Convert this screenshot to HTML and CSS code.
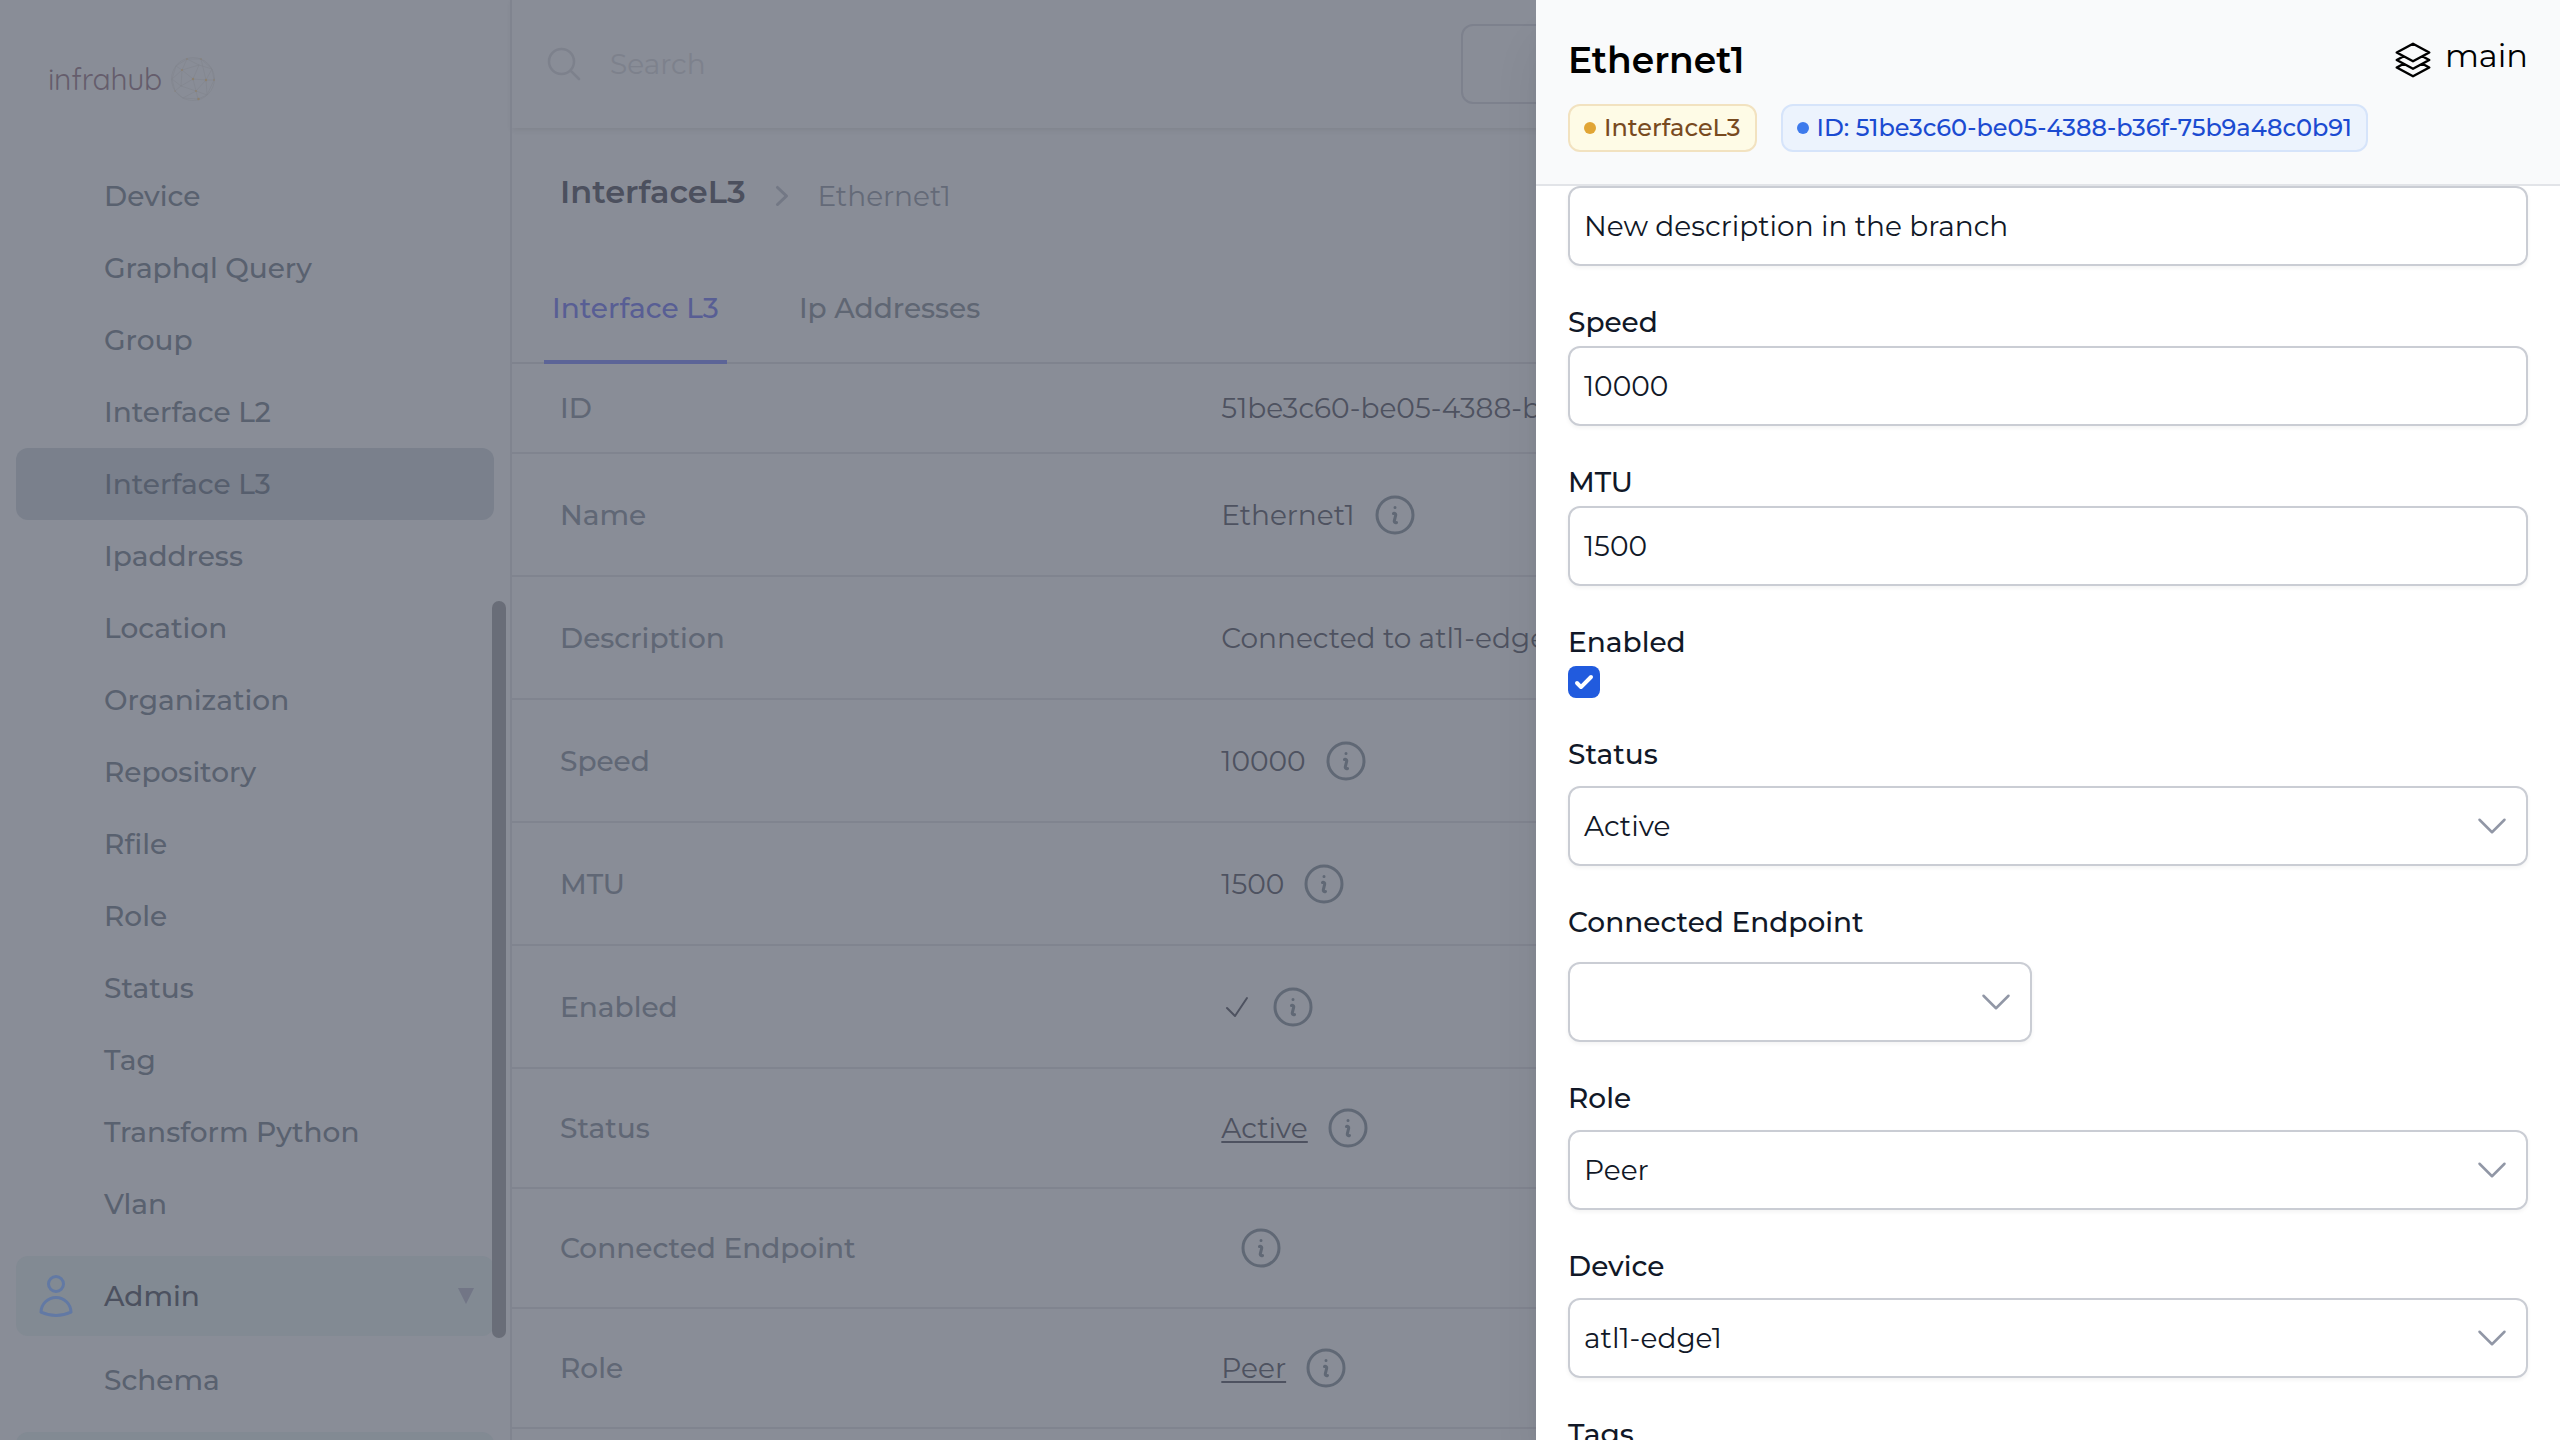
FILE: index.html
```
<!DOCTYPE html>
<html lang="en">
<head>
<meta charset="utf-8">
<title>Infrahub</title>
<link rel="stylesheet" href="styles.css">
</head>
<body>
<svg class="sprite" aria-hidden="true">
  <symbol id="info" viewBox="0 0 24 24"><path d="M11.25 11.25l.041-.02a.75.75 0 011.063.852l-.708 2.836a.75.75 0 001.063.853l.041-.021M21 12a9 9 0 11-18 0 9 9 0 0118 0zm-9-3.75h.008v.008H12V8.25z"/></symbol>
  <symbol id="down" viewBox="0 0 24 24"><path d="M19.5 8.25l-7.5 7.5-7.5-7.5"/></symbol>
</svg>
<div class="app">
  <aside class="sidebar">
    <div class="logo">
      <span class="logo-name">infrahub</span>
      <svg class="globe" viewBox="0 0 48 48">
        <circle class="mesh" cx="24" cy="24" r="21.5"/>
        <path class="mesh" d="M18 4L32 4L43 14L45 25L38 40L29 44L14 43L6 36L3 24L7 11L18 4L13 15L24 24L37 25L45 25M13 15L12 31L24 24L27 36L37 25L32 4M13 15L30 10L24 24M30 10L18 4M30 10L43 14L37 25M12 31L27 36L29 44M12 31L6 36M3 24L13 15L7 11M12 31L3 24M27 36L14 43M37 25L38 40L27 36"/>
        <g class="nodes"><circle cx="24" cy="24" r="1.2"/><circle cx="37" cy="25" r="1.2"/><circle cx="45" cy="25" r=".8"/><circle cx="13" cy="15" r=".9"/><circle cx="27" cy="36" r=".9"/><circle cx="29.500" cy="44" r="1.2"/><circle cx="18" cy="4" r=".7"/><circle cx="32" cy="4" r=".7"/><circle cx="6" cy="36" r=".6"/></g>
      </svg>
    </div>
    <nav class="menu">
      <a class="item">Device</a>
      <a class="item">Graphql Query</a>
      <a class="item">Group</a>
      <a class="item">Interface L2</a>
      <a class="item selected">Interface L3</a>
      <a class="item">Ipaddress</a>
      <a class="item">Location</a>
      <a class="item">Organization</a>
      <a class="item">Repository</a>
      <a class="item">Rfile</a>
      <a class="item">Role</a>
      <a class="item">Status</a>
      <a class="item">Tag</a>
      <a class="item">Transform Python</a>
      <a class="item">Vlan</a>
      <div class="group">
        <svg class="icon-48" viewBox="0 0 24 24"><path d="M15.75 6a3.75 3.75 0 11-7.5 0 3.75 3.75 0 017.5 0zM4.501 20.118a7.5 7.5 0 0114.998 0A17.933 17.933 0 0112 21.75c-2.676 0-5.216-.584-7.499-1.632z"/></svg>
        <span class="group-name">Admin</span>
        <svg class="caret" viewBox="0 0 16 16"><path d="M0 0H16L8 16z"/></svg>
      </div>
      <a class="item">Schema</a>
      <div class="group"></div>
    </nav>
    <div class="scroll-thumb"></div>
  </aside>

  <main class="main">
    <header class="topbar">
      <svg class="icon-40 search-icon" viewBox="0 0 24 24"><path d="M21 21l-5.197-5.197m0 0A7.5 7.5 0 105.196 5.196a7.5 7.5 0 0010.607 10.607z"/></svg>
      <span class="search">Search</span>
      <div class="branch-button"></div>
    </header>
    <div class="crumbs">
      <span class="crumb-kind">InterfaceL3</span>
      <svg class="crumb-sep" viewBox="0 0 20 20"><path d="M7.21 14.77a.75.75 0 01.02-1.06L11.168 10 7.23 6.29a.75.75 0 111.04-1.08l4.5 4.25a.75.75 0 010 1.08l-4.5 4.25a.75.75 0 01-1.06-.02z"/></svg>
      <span class="crumb-name">Ethernet1</span>
    </div>
    <div class="tabs">
      <a class="tab active">Interface L3</a>
      <a class="tab">Ip Addresses</a>
    </div>
    <dl class="rows">
      <div class="row row-id"><dt>ID</dt><dd><span>51be3c60-be05-4388-b36f-75b9a48c0b91</span></dd></div>
      <div class="row"><dt>Name</dt><dd><span>Ethernet1</span><svg class="icon-48"><use href="#info"/></svg></dd></div>
      <div class="row"><dt>Description</dt><dd><span>Connected to atl1-edge1</span></dd></div>
      <div class="row"><dt>Speed</dt><dd><span>10000</span><svg class="icon-48"><use href="#info"/></svg></dd></div>
      <div class="row"><dt>MTU</dt><dd><span>1500</span><svg class="icon-48"><use href="#info"/></svg></dd></div>
      <div class="row"><dt>Enabled</dt><dd><svg class="tick" viewBox="0 0 24 24"><path d="M4.500 12.750l6 6 9-13.500"/></svg><svg class="icon-48"><use href="#info"/></svg></dd></div>
      <div class="row row-rel"><dt>Status</dt><dd><a class="link">Active</a><svg class="icon-48"><use href="#info"/></svg></dd></div>
      <div class="row row-rel"><dt>Connected Endpoint</dt><dd><span></span><svg class="icon-48"><use href="#info"/></svg></dd></div>
      <div class="row row-rel"><dt>Role</dt><dd><a class="link">Peer</a><svg class="icon-48"><use href="#info"/></svg></dd></div>
    </dl>
  </main>
</div>

<section class="drawer">
  <header class="drawer-head">
    <div class="drawer-title">
      <h2>Ethernet1</h2>
      <div class="branch">
        <svg class="icon-40" viewBox="0 0 24 24"><path d="M6.429 9.750L2.250 12l4.179 2.250m0-4.500l5.571 3 5.571-3m-11.142 0L2.250 7.500 12 2.250l9.750 5.250-4.179 2.250m0 0L21.750 12l-4.179 2.250m0 0l4.179 2.250L12 21.750 2.250 16.500l4.179-2.250m11.142 0l-5.571 3-5.571-3"/></svg>
        <span>main</span>
      </div>
    </div>
    <div class="badges">
      <span class="badge kind"><i class="dot"></i>InterfaceL3</span>
      <span class="badge ident"><i class="dot"></i>ID: 51be3c60-be05-4388-b36f-75b9a48c0b91</span>
    </div>
  </header>
  <form class="form">
    <div class="field"><div class="control">New description in the branch</div></div>
    <div class="field"><label>Speed</label><div class="control">10000</div></div>
    <div class="field"><label>MTU</label><div class="control">1500</div></div>
    <div class="field"><label>Enabled</label><div class="checkbox"><svg viewBox="0 0 16 16"><path d="M12.207 4.793a1 1 0 010 1.414l-5 5a1 1 0 01-1.414 0l-2-2a1 1 0 011.414-1.414L6.500 9.086l4.293-4.293a1 1 0 011.414 0z"/></svg></div></div>
    <div class="field select"><label>Status</label><div class="control">Active<svg class="icon-40"><use href="#down"/></svg></div></div>
    <div class="field select endpoint"><label>Connected Endpoint</label><div class="control"><svg class="icon-40"><use href="#down"/></svg></div></div>
    <div class="field select"><label>Role</label><div class="control">Peer<svg class="icon-40"><use href="#down"/></svg></div></div>
    <div class="field select"><label>Device</label><div class="control">atl1-edge1<svg class="icon-40"><use href="#down"/></svg></div></div>
    <div class="field select"><label>Tags</label></div>
  </form>
</section>
</body>
</html>
```
FILE: styles.css
```
* { box-sizing: border-box; }

html, body { height: 100%; }

body {
  margin: 0;
  overflow: hidden;
  font: 400 28px/40px Montserrat, Inter, "Liberation Sans", sans-serif;
  color: #111827;
  background: #898d97;
  -webkit-font-smoothing: antialiased;
}

.sprite { display: none; }

svg { flex: none; fill: none; stroke: currentColor; stroke-width: 1.5; stroke-linecap: round; stroke-linejoin: round; }
.icon-48 { width: 48px; height: 48px; }
.icon-40 { width: 40px; height: 40px; }

.app { display: flex; height: 1440px; overflow: hidden; }

/* Sidebar */
.sidebar {
  position: relative;
  flex: none;
  width: 512px;
  border-right: 2px solid #80848f;
}

.logo { display: flex; align-items: center; gap: 5px; height: 160px; padding: 0 0 2px 48px; }
.logo-name { width: 116px; font: 400 30px/40px Quicksand, Montserrat, Inter, sans-serif; letter-spacing: -.3px; color: #655d6c; white-space: nowrap; }
.globe { width: 48px; height: 48px; }
.mesh { stroke: #81848d; stroke-width: .6; }
.nodes { fill: #8c806f; stroke: none; }

.menu { padding: 0 16px; }
.item {
  display: flex;
  align-items: center;
  height: 72px;
  padding-left: 88px;
  border-radius: 12px;
  font-weight: 500;
  color: #59616f;
}
.selected { background: #7a808c; color: #565e6d; }
.group {
  display: flex;
  align-items: center;
  height: 80px;
  margin: 16px 0 8px;
  padding: 0 20px 0 16px;
  border-radius: 12px;
  background: #828a93;
  color: #6279a4;
}
.group-name { flex: 1; margin-left: 24px; font-weight: 500; color: #4c515f; }
.caret { width: 16px; height: 16px; fill: #727686; stroke: none; }
.scroll-thumb { position: absolute; top: 601px; right: 4px; width: 14px; height: 737px; border-radius: 7px; background: #696d78; }

/* Main page */
.main { flex: 1; }
.topbar {
  display: flex;
  align-items: center;
  height: 128px;
  padding-left: 32px;
  box-shadow: 0 2px 6px rgb(0 0 0 / .07);
}
.search-icon { color: #7d818c; stroke-width: 1.5; }
.search { width: 851px; margin-left: 26px; color: #7d818c; }
.branch-button { flex: 1; height: 80px; border: 2px solid #7d818d; border-radius: 12px; }

.crumbs { display: flex; align-items: center; height: 136px; padding-left: 48px; }
.crumb-kind { padding-bottom: 9px; font-size: 32px; font-weight: 600; color: #4c505e; }
.crumb-sep { width: 40px; height: 40px; margin: 0 16px; fill: #737885; stroke: none; }
.crumb-name { color: #646a78; }

.tabs { display: flex; gap: 64px; height: 100px; padding-left: 32px; border-bottom: 2px solid #7f838e; }
.tab { height: 100px; padding: 24px 8px 0; font-weight: 500; color: #5f6673; border-bottom: 4px solid transparent; }
.active { color: #585e94; border-color: #5c6497; }

.rows { margin: 0; }
.row { display: flex; align-items: center; height: 123px; padding-left: 48px; border-bottom: 2px solid #80848f; }
.row-id { height: 90px; }
.row-rel { height: 120px; }
.row dt { width: 661.33px; font-weight: 500; color: #606775; }
.row dd { display: flex; align-items: center; gap: 16px; margin: 0; color: #4e5260; white-space: nowrap; }
.row dd .icon-48 { color: #606875; }
.row dd .tick { width: 32px; height: 32px; }
.link { text-decoration: underline; text-decoration-thickness: 2px; text-underline-offset: 3px; }

/* Edit drawer */
.drawer {
  position: absolute;
  inset: 0 0 0 auto;
  width: 1024px;
  background: #fff;
  box-shadow: 0 40px 50px -10px rgb(0 0 0 / .1), 0 16px 20px -12px rgb(0 0 0 / .1);
}
.drawer-head { height: 186px; padding: 40px 32px 0; background: #f9fafb; border-bottom: 2px solid #e2e4e8; }
.drawer-title { display: flex; justify-content: space-between; align-items: flex-start; height: 64px; color: #000; }
.drawer-title h2 { margin: 0; font-size: 36px; font-weight: 600; line-height: 41px; }
.branch { display: flex; gap: 12px; font-size: 32px; }
.branch span { line-height: 32px; }
.badges { display: flex; gap: 24px; }
.badge {
  display: flex;
  align-items: center;
  height: 48px;
  padding: 0 14px;
  border: 2px solid;
  border-radius: 12px;
  font-size: 24px;
  font-weight: 500;
}
.dot { width: 12px; height: 12px; margin-right: 8px; border-radius: 50%; }
.kind { color: #784a1f; background: #fefbe6; border-color: #f2e2c0; }
.kind .dot { background: #e1a535; }
.ident { color: #1b4bd1; background: #ecf3fd; border-color: #d6e4fa; }
.ident .dot { background: #3d7aec; }

.form { height: 1254px; padding: 0 32px; overflow: hidden; }
.field { margin-bottom: 36px; }
.field label { display: block; margin-bottom: 4px; font-weight: 500; }
.control {
  display: flex;
  align-items: center;
  justify-content: space-between;
  height: 80px;
  padding: 0 14px;
  border: 2px solid #cacdd4;
  border-radius: 12px;
  box-shadow: 0 2px 4px rgb(0 0 0 / .05);
}
.control svg { margin-left: auto; color: #9197a6; }
.select label { margin-bottom: 12px; }
.endpoint label { margin-bottom: 20px; }
.endpoint .control { width: 464px; }
.checkbox { width: 32px; height: 32px; border-radius: 8px; background: #215bde; }
.checkbox svg { display: block; fill: #fff; stroke: none; }
```
